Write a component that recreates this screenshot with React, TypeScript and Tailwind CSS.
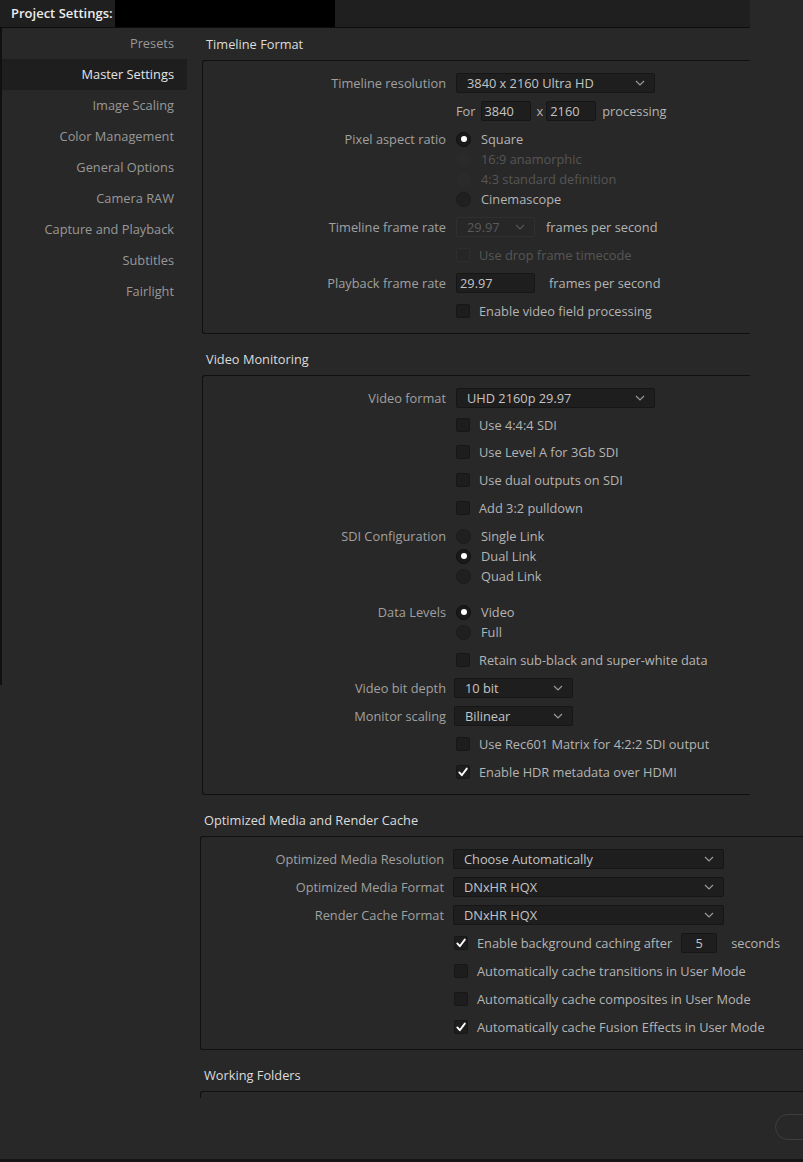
import React from "react";

const Chevron = ({ className = "" }: { className?: string }) => (
  <svg width="10" height="6" viewBox="0 0 10 6" className={className}>
    <path d="M1 1l4 4 4-4" fill="none" stroke="currentColor" strokeWidth="1.2" />
  </svg>
);

function Select({ value, className, disabled }: { value: string; className: string; disabled?: boolean }) {
  return (
    <div
      className={
        "flex h-[20px] items-center justify-between rounded-[2px] border pl-[10px] pr-[9px] " +
        (disabled ? "border-[#2f2f2f] bg-[#272727] text-[#5a5a5a]" : "border-[#161616] bg-[#1e1e1e] text-[#c4c4c4]") +
        " " +
        className
      }
    >
      <span className="leading-[18px]">{value}</span>
      <Chevron className={disabled ? "text-[#555]" : "text-[#9a9a9a]"} />
    </div>
  );
}

function Input({ value, className }: { value: string; className: string }) {
  return (
    <div
      className={
        "flex h-[20px] items-center rounded-[2px] border border-[#161616] bg-[#1e1e1e] pl-[3px] text-[#c4c4c4] leading-[18px] " +
        className
      }
    >
      {value}
    </div>
  );
}

function Check({ label, checked, disabled }: { label: string; checked?: boolean; disabled?: boolean }) {
  return (
    <div className="flex items-center">
      <div
        className={
          "flex h-[14px] w-[14px] items-center justify-center rounded-[2px] border " +
          (disabled ? "border-[#2e2e2e] bg-[#262626]" : "border-[#171717] bg-[#1d1d1d]")
        }
      >
        {checked && (
          <svg width="12" height="12" viewBox="0 0 12 12">
            <path d="M2.3 6.4l2.5 2.8L9.8 2.6" fill="none" stroke="#ffffff" strokeWidth="1.9" strokeLinecap="round" strokeLinejoin="round" />
          </svg>
        )}
      </div>
      <span className={"ml-[9px] leading-[18px] " + (disabled ? "text-[#565656]" : "text-[#b4b4b4]")}>{label}</span>
    </div>
  );
}

function Radio({ label, checked, disabled }: { label: string; checked?: boolean; disabled?: boolean }) {
  return (
    <div className="flex h-[20px] items-center">
      <div
        className={
          "flex h-[15px] w-[15px] items-center justify-center rounded-full " +
          (disabled ? "bg-[#2a2a2a]" : checked ? "border border-[#101010] bg-[#1a1a1a]" : "border border-[#1c1c1c] bg-[#202020]")
        }
      >
        {checked && <div className="h-[6px] w-[6px] rounded-full bg-white" />}
      </div>
      <span className={"ml-[10px] leading-[18px] " + (disabled ? "text-[#565656]" : "text-[#b4b4b4]")}>{label}</span>
    </div>
  );
}

function Row({ label, children, h = "h-[28px]" }: { label?: string; children: React.ReactNode; h?: string }) {
  return (
    <div className={"flex items-center " + h}>
      <div className="w-[253px] shrink-0 pr-[10px] text-right leading-[18px] text-[#a0a0a0]">{label}</div>
      <div className="flex items-center">{children}</div>
    </div>
  );
}

function RadioGroup({
  label,
  items,
  pad,
}: {
  label: string;
  items: { label: string; checked?: boolean; disabled?: boolean }[];
  pad: string;
}) {
  return (
    <div className={"flex " + pad}>
      <div className="h-[20px] w-[253px] shrink-0 pr-[10px] text-right leading-[20px] text-[#a0a0a0]">{label}</div>
      <div className="flex flex-col">
        {items.map((it) => (
          <Radio key={it.label} {...it} />
        ))}
      </div>
    </div>
  );
}

function Heading({ children }: { children: React.ReactNode }) {
  return <div className="h-[32px] pl-[4px] pt-[7px] leading-[18px] text-[#dcdcdc]">{children}</div>;
}

const sidebar = [
  "Presets",
  "Master Settings",
  "Image Scaling",
  "Color Management",
  "General Options",
  "Camera RAW",
  "Capture and Playback",
  "Subtitles",
  "Fairlight",
];

export default function App() {
  return (
    <div className="flex h-[1162px] w-[803px] flex-col overflow-hidden bg-[#282828] font-['Open_Sans',sans-serif] text-[12.8px]">
      <div className="flex-1 overflow-hidden">
        {/* Title bar */}
        <div className="flex h-[28px] w-[750px] border-b border-[#0c0c0c] bg-[#1f1f1f]">
          <div className="w-[115px] whitespace-nowrap pl-[11px] pt-[4px] text-[13px] font-semibold leading-[18px] text-[#ececec]">
            Project Settings:
          </div>
          <div className="h-[27px] w-[220px] bg-black" />
        </div>

        <div className="flex">
          {/* Sidebar */}
          <div className="h-[657px] w-[187px] shrink-0 self-start border-l-[2px] border-[#101010]">
            {sidebar.map((s) => (
              <div
                key={s}
                className={
                  "flex h-[31px] items-center justify-end pb-[2px] pr-[13px] leading-[18px] " +
                  (s === "Master Settings" ? "bg-[#1e1e1e] text-[#e4e4e4]" : "text-[#989898]")
                }
              >
                {s}
              </div>
            ))}
          </div>

          {/* Main */}
          <div className="flex flex-1 flex-col">
            {/* Timeline Format */}
            <div className="ml-[15px] w-[548px]">
              <Heading>Timeline Format</Heading>
              <div className="rounded-l-[3px] border-y border-l border-[#101010] pb-[8px] pt-[8px]">
                <Row label="Timeline resolution">
                  <Select value="3840 x 2160 Ultra HD" className="w-[199px]" />
                </Row>
                <Row>
                  <span className="leading-[18px] text-[#b4b4b4]">For</span>
                  <Input value="3840" className="ml-[5px] w-[50px]" />
                  <span className="ml-[6px] leading-[18px] text-[#b4b4b4]">x</span>
                  <Input value="2160" className="ml-[3px] w-[50px]" />
                  <span className="ml-[6px] leading-[18px] text-[#b4b4b4]">processing</span>
                </Row>
                <RadioGroup
                  label="Pixel aspect ratio"
                  pad="pt-[4px] pb-[4px]"
                  items={[
                    { label: "Square", checked: true },
                    { label: "16:9 anamorphic", disabled: true },
                    { label: "4:3 standard definition", disabled: true },
                    { label: "Cinemascope" },
                  ]}
                />
                <Row label="Timeline frame rate">
                  <Select value="29.97" className="w-[79px]" disabled />
                  <span className="ml-[11px] leading-[18px] text-[#b4b4b4]">frames per second</span>
                </Row>
                <Row>
                  <Check label="Use drop frame timecode" disabled />
                </Row>
                <Row label="Playback frame rate">
                  <Input value="29.97" className="w-[79px]" />
                  <span className="ml-[14px] leading-[18px] text-[#b4b4b4]">frames per second</span>
                </Row>
                <Row>
                  <Check label="Enable video field processing" />
                </Row>
              </div>
            </div>

            {/* Video Monitoring */}
            <div className="ml-[15px] mt-[9px] w-[548px]">
              <Heading>Video Monitoring</Heading>
              <div className="rounded-l-[3px] border-y border-l border-[#101010] pb-[8px] pt-[8px]">
                <Row label="Video format" h="h-[27px]">
                  <Select value="UHD 2160p 29.97" className="w-[199px]" />
                </Row>
                <Row h="h-[27px]">
                  <Check label="Use 4:4:4 SDI" />
                </Row>
                <Row>
                  <Check label="Use Level A for 3Gb SDI" />
                </Row>
                <Row>
                  <Check label="Use dual outputs on SDI" />
                </Row>
                <Row>
                  <Check label="Add 3:2 pulldown" />
                </Row>
                <RadioGroup
                  label="SDI Configuration"
                  pad="pt-[4px] pb-[8px]"
                  items={[{ label: "Single Link" }, { label: "Dual Link", checked: true }, { label: "Quad Link" }]}
                />
                <RadioGroup
                  label="Data Levels"
                  pad="pt-[8px] pb-[4px]"
                  items={[{ label: "Video", checked: true }, { label: "Full" }]}
                />
                <Row>
                  <Check label="Retain sub-black and super-white data" />
                </Row>
                <Row label="Video bit depth">
                  <Select value="10 bit" className="ml-[-2px] w-[119px]" />
                </Row>
                <Row label="Monitor scaling">
                  <Select value="Bilinear" className="ml-[-2px] w-[119px]" />
                </Row>
                <Row>
                  <Check label="Use Rec601 Matrix for 4:2:2 SDI output" />
                </Row>
                <Row>
                  <Check label="Enable HDR metadata over HDMI" checked />
                </Row>
              </div>
            </div>

            {/* Optimized Media and Render Cache */}
            <div className="ml-[13px] mt-[9px]">
              <Heading>Optimized Media and Render Cache</Heading>
              <div className="rounded-l-[3px] border-y border-l border-[#101010] pb-[8px] pt-[8px]">
                <Row label="Optimized Media Resolution">
                  <Select value="Choose Automatically" className="ml-[-1px] w-[271px]" />
                </Row>
                <Row label="Optimized Media Format">
                  <Select value="DNxHR HQX" className="ml-[-1px] w-[271px]" />
                </Row>
                <Row label="Render Cache Format">
                  <Select value="DNxHR HQX" className="ml-[-1px] w-[271px]" />
                </Row>
                <Row>
                  <Check label="Enable background caching after" checked />
                  <div className="ml-[9px] flex h-[20px] w-[36px] items-center justify-center rounded-[2px] border border-[#161616] bg-[#1e1e1e] leading-[18px] text-[#c4c4c4]">
                    5
                  </div>
                  <span className="ml-[14px] leading-[18px] text-[#b4b4b4]">seconds</span>
                </Row>
                <Row>
                  <Check label="Automatically cache transitions in User Mode" />
                </Row>
                <Row>
                  <Check label="Automatically cache composites in User Mode" />
                </Row>
                <Row>
                  <Check label="Automatically cache Fusion Effects in User Mode" checked />
                </Row>
              </div>
            </div>

            {/* Working Folders */}
            <div className="ml-[13px] mt-[9px]">
              <Heading>Working Folders</Heading>
              <div className="h-[7px] rounded-tl-[3px] border-l border-t border-[#101010]" />
              <div className="ml-[575px] mt-[16px] h-[26px] w-[80px] rounded-full border border-[#3e3e3e]" />
            </div>
          </div>
        </div>
      </div>
      <div className="h-[3px] bg-[#151515]" />
    </div>
  );
}
